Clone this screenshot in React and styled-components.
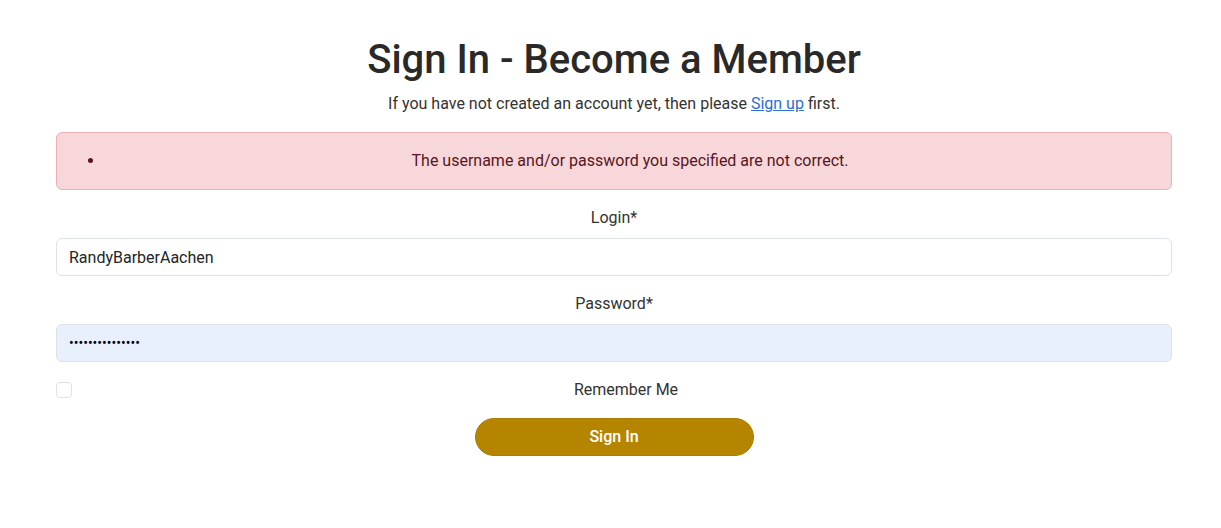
import React from "react";
import styled, { createGlobalStyle } from "styled-components";

const Global = createGlobalStyle`
  html, body { margin: 0; padding: 0; background: #fff; }
  body {
    font-family: Roboto, "Liberation Sans", Arial, sans-serif;
    font-size: 16px;
    line-height: 24px;
    color: #212529;
  }
  * { box-sizing: border-box; }
`;

const Page = styled.main`
  width: 1116px;
  margin-left: 56px;
  padding-top: 36px;
  display: flex;
  flex-direction: column;
`;

const Title = styled.h1`
  margin: 0;
  font-size: 40px;
  line-height: 48px;
  font-weight: 500;
  text-align: center;
  color: #292929;
`;

const Lead = styled.p`
  margin: 8px 0 16px;
  text-align: center;
  color: #333;
  a { color: #2b6ed9; text-decoration: underline; }
`;

const Alert = styled.div`
  background: #f8d7da;
  border: 1px solid #f1aeb5;
  border-radius: 6px;
  padding: 16px 16px;
  color: #58151c;
  ul { margin: 0; padding-left: 32px; }
  li { text-align: center; }
`;

const Field = styled.div`
  display: flex;
  flex-direction: column;
  margin-top: ${(p) => p.$top}px;
`;

const Label = styled.label`
  display: block;
  text-align: center;
  color: #333;
  margin-bottom: 8px;
`;

const Input = styled.input`
  display: block;
  width: 100%;
  height: 38px;
  padding: 6px 12px;
  font-family: inherit;
  font-size: ${(p) => (p.type === "password" ? "14px" : "16px")};
  color: ${(p) => (p.type === "password" ? "#000" : "#212529")};
  background: ${(p) => (p.$autofill ? "#e8f0fe" : "#fff")};
  border: 1px solid #dee2e6;
  border-radius: 6px;
  outline: none;
`;

const CheckRow = styled.div`
  display: flex;
  align-items: flex-start;
  margin-top: 16px;
`;

const Check = styled.input`
  appearance: none;
  width: 16px;
  height: 16px;
  margin: 4px 8px 0 0;
  border: 1px solid #dee2e6;
  border-radius: 4px;
  background: #fff;
  flex: none;
`;

const CheckLabel = styled.label`
  flex: 1;
  text-align: center;
  color: #333;
`;

const Button = styled.button`
  align-self: center;
  margin-top: 16px;
  width: 279px;
  height: 38px;
  border: 1px solid #a87c00;
  border-radius: 19px;
  background: #b68500;
  color: #fff;
  font: inherit;
  font-size: 16px;
  font-weight: 500;
`;

export default function App() {
  return (
    <>
      <Global />
      <Page>
        <Title>Sign In - Become a Member</Title>
        <Lead>
          If you have not created an account yet, then please <a href="#">Sign up</a> first.
        </Lead>
        <Alert>
          <ul>
            <li>The username and/or password you specified are not correct.</li>
          </ul>
        </Alert>
        <Field $top={16}>
          <Label htmlFor="login">Login*</Label>
          <Input id="login" defaultValue="RandyBarberAachen" />
        </Field>
        <Field $top={16}>
          <Label htmlFor="pw">Password*</Label>
          <Input id="pw" type="password" $autofill defaultValue="aaaaaaaaaaaaaaa" />
        </Field>
        <CheckRow>
          <Check type="checkbox" id="rem" />
          <CheckLabel htmlFor="rem">Remember Me</CheckLabel>
        </CheckRow>
        <Button>Sign In</Button>
      </Page>
    </>
  );
}
